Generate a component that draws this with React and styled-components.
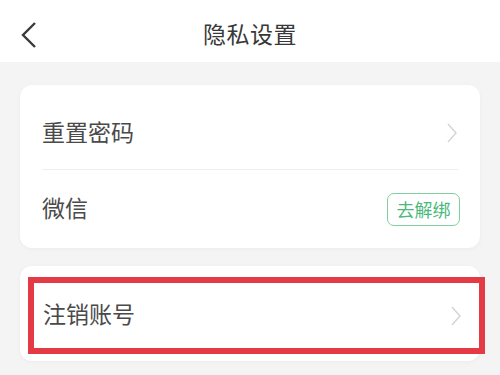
import React from 'react';
import styled, { createGlobalStyle } from 'styled-components';

const GlobalStyle = createGlobalStyle`
  html, body {
    margin: 0;
    padding: 0;
    background: #f4f4f4;
    font-family: "Noto Sans CJK SC", "Noto Sans", sans-serif;
  }
`

const Page = styled.div`
  width: 500px;
  height: 375px;
  overflow: hidden;
  background: #f4f4f4;
`

const Header = styled.div`
  height: 62px;
  background: #fff;
  display: flex;
  align-items: center;
  justify-content: center;
  position: relative;
`

const BackButton = styled.div`
  position: absolute;
  left: 19px;
  top: 21px;
  width: 20px;
  height: 28px;
  display: flex;
`

const Title = styled.h1`
  margin: 0;
  font-size: 23px;
  font-weight: 400;
  color: #383838;
  letter-spacing: 0.5px;
  transform: translateY(2px);
`

const Body = styled.div`
  padding: 23px 20px 0;
  display: flex;
  flex-direction: column;
  gap: 18px;
`

const Card = styled.div`
  background: #fff;
  border-radius: 12px;
  box-shadow: 0 1px 4px rgba(0, 0, 0, 0.04);
  padding: ${p => p.$pad || '12px 22px 0'};
`

const Row = styled.div`
  height: ${p => p.$h || 72}px;
  display: flex;
  align-items: center;
  justify-content: space-between;
  border-bottom: ${p => (p.$divider ? '1px solid #efefef' : 'none')};
`

const Marked = styled.div`
  margin-right: -5px;
  height: 65px;
  border: 6px solid #e33a45;
  display: flex;
  align-items: center;
  justify-content: space-between;
  padding: 0 17px 0 9px;
`

const Label = styled.span`
  font-size: 23px;
  color: #4a4a4a;
  line-height: 1;
  transform: translateY(-2px);
`

const Unbind = styled.button`
  width: 73px;
  height: 33px;
  border: 1.5px solid #7fcf9f;
  border-radius: 7px;
  background: #fff;
  color: #4bb97c;
  font-family: inherit;
  font-size: 18px;
  padding: 0;
  margin-right: -2px;
`

const Chevron = () => (
  <svg width="12" height="22" viewBox="0 0 12 22">
    <path d="M2 2 L10 11 L2 20" fill="none" stroke="#d4d4d4" strokeWidth="1.4" />
  </svg>
)

export default function App() {
  return (
    <Page>
      <GlobalStyle />
      <Header>
        <BackButton>
          <svg width="20" height="28" viewBox="0 0 20 28">
            <path d="M16 2 L4 14 L16 26" fill="none" stroke="#3a3a3a" strokeWidth="2.4" />
          </svg>
        </BackButton>
        <Title>隐私设置</Title>
      </Header>
      <Body>
        <Card>
          <Row $divider>
            <Label>重置密码</Label>
            <Chevron />
          </Row>
          <Row $h={78}>
            <Label>微信</Label>
            <Unbind>去解绑</Unbind>
          </Row>
        </Card>
        <Card $pad="11px 0 7px 8px">
          <Marked>
            <Label>注销账号</Label>
            <Chevron />
          </Marked>
        </Card>
      </Body>
    </Page>
  );
}
